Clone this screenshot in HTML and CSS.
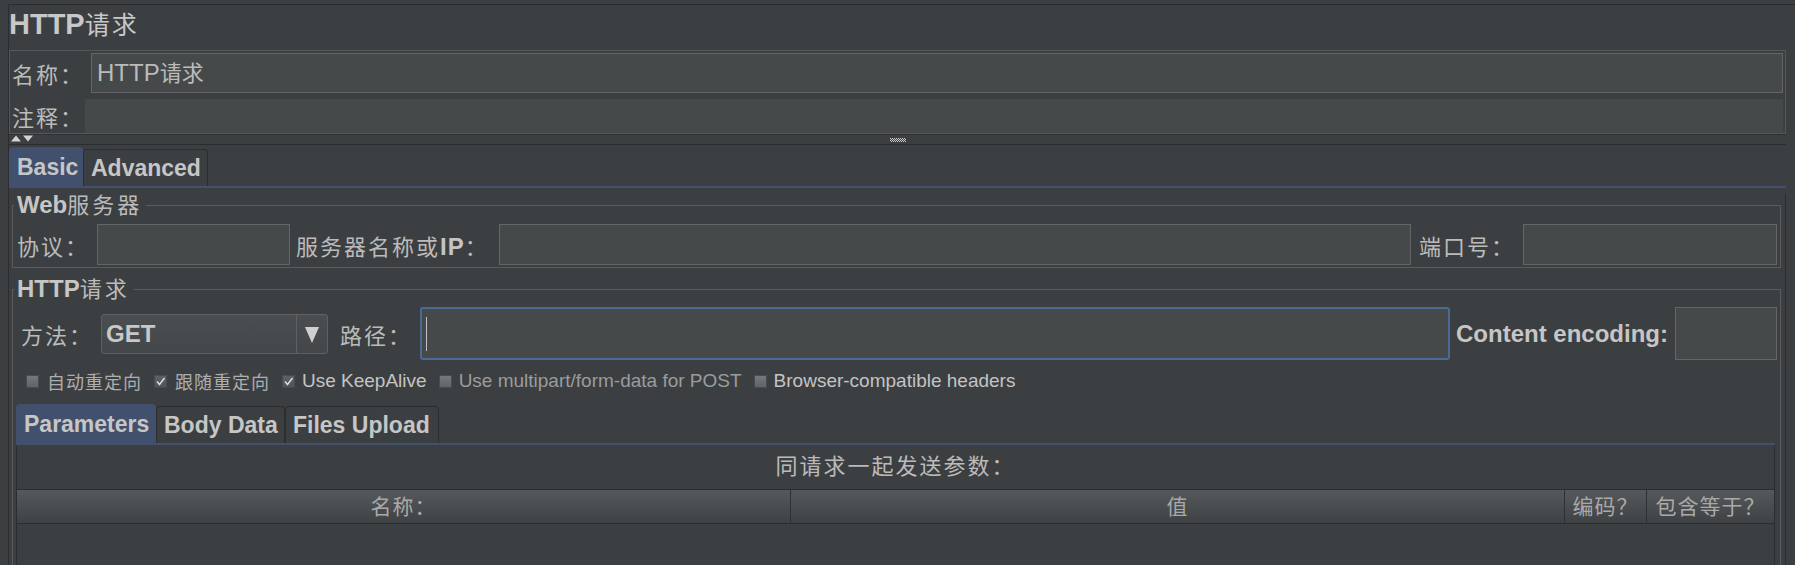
FILE: index.html
```html
<!DOCTYPE html>
<html lang="zh-CN">
<head>
<meta charset="utf-8">
<title>HTTP请求</title>
<link rel="stylesheet" href="styles.css">
</head>
<body>
<div class="frame">
  <div class="title"><b>HTTP</b><span class="title-zh">请求</span></div>

  <div class="namepanel">
    <div class="nrow">
      <span class="lbl nlabel">名称：</span>
      <div class="field namefield"><span class="lat">HTTP</span><span class="zh21">请求</span></div>
    </div>
    <div class="crow">
      <span class="lbl nlabel clabel">注释：</span>
      <div class="commentfield"></div>
    </div>
  </div>

  <div class="divider">
    <svg class="arrows" width="24" height="7" viewBox="0 0 24 7"><polygon points="0,6.5 5,0.5 10,6.5" fill="#d2d2d2"/><polygon points="12,0.5 22,0.5 17,6.5" fill="#d2d2d2"/></svg>
    <svg class="grip" width="16" height="4" viewBox="0 0 16 4"><defs><pattern id="chk" width="2" height="2" patternUnits="userSpaceOnUse"><rect width="1" height="1" fill="#cfcfcf"/><rect x="1" y="1" width="1" height="1" fill="#cfcfcf"/></pattern></defs><rect width="16" height="4" fill="url(#chk)"/></svg>
    <span></span>
  </div>

  <div class="tabs main-tabs">
    <div class="tab sel t-basic">Basic</div>
    <div class="tab t-adv">Advanced</div>
  </div>

  <div class="tabbody">
    <fieldset class="group g-web">
      <legend><b>Web</b><span class="zh">服务器</span></legend>
      <div class="srow">
        <span class="lbl w-proto">协议：</span>
        <div class="field w-protoin"></div>
        <span class="lbl w-server">服务器名称或<b>IP</b>：</span>
        <div class="field grow"></div>
        <span class="lbl w-port">端口号：</span>
        <div class="field w-portin"></div>
      </div>
    </fieldset>

    <fieldset class="group g-http">
      <legend><b>HTTP</b><span class="zh">请求</span></legend>
      <div class="mrow">
        <span class="lbl w-method">方法：</span>
        <div class="combo">
          <span class="combo-val">GET</span>
          <span class="combo-btn"><svg width="14" height="16" viewBox="0 0 14 16"><polygon points="0,0 14,0 7,16" fill="#d0d0d0"/></svg></span>
        </div>
        <span class="lbl w-path">路径：</span>
        <div class="field path grow"><span class="caret"></span></div>
        <span class="enc-lbl">Content encoding:</span>
        <div class="field w-encin"></div>
      </div>

      <div class="cbrow">
        <div class="cb zhcb"><span class="box"></span><span class="cbt">自动重定向</span></div>
        <div class="cb zhcb"><span class="box on"><svg width="11" height="11" viewBox="0 0 11 11"><path d="M2 5.5 L4.5 8.5 L9.5 2" fill="none" stroke="#dadada" stroke-width="1.6"/></svg></span><span class="cbt">跟随重定向</span></div>
        <div class="cb"><span class="box on"><svg width="11" height="11" viewBox="0 0 11 11"><path d="M2 5.5 L4.5 8.5 L9.5 2" fill="none" stroke="#dadada" stroke-width="1.6"/></svg></span><span class="cbt bright">Use KeepAlive</span></div>
        <div class="cb"><span class="box"></span><span class="cbt dim">Use multipart/form-data for POST</span></div>
        <div class="cb"><span class="box"></span><span class="cbt bright">Browser-compatible headers</span></div>
      </div>

      <div class="tabs sub-tabs">
        <div class="tab sel t-params">Parameters</div>
        <div class="tab t-body">Body Data</div>
        <div class="tab t-files">Files Upload</div>
      </div>

      <div class="subpane">
        <div class="caption">同请求一起发送参数：</div>
        <div class="thead">
          <div class="th">名称：</div>
          <div class="th">值</div>
          <div class="th">编码？</div>
          <div class="th">包含等于？</div>
        </div>
        <div class="tbody"></div>
      </div>
    </fieldset>
  </div>
</div>
</body>
</html>
```

FILE: styles.css
```css
* { box-sizing: border-box; }
html, body { margin: 0; padding: 0; }
body {
  background: #3c3f41;
  color: #bbbbbb;
  font-family: "Liberation Sans", "Noto Sans CJK SC", sans-serif;
  width: 1795px;
  height: 565px;
  overflow: hidden;
}
.frame {
  margin: 4px 0 0 8px;
  border-top: 1px solid #2b2d2f;
  border-left: 1px solid #2b2d2f;
  height: 561px;
  overflow: hidden;
}
.title {
  height: 45px;
  line-height: 38px;
  font-size: 29px;
  color: #c8c8c8;
  white-space: nowrap;
}
.title b { font-weight: bold; }
.title-zh { font-size: 25px; letter-spacing: 2px; }

/* name / comment panel */
.namepanel {
  margin-right: 9px;
  border: 1px solid #55585a;
  height: 84px;
  padding-top: 2px;
}
.nrow { display: flex; align-items: center; height: 40px; }
.crow { display: flex; align-items: center; height: 34px; margin-top: 6px; }
.lbl {
  font-size: 22px;
  letter-spacing: 2px;
  white-space: nowrap;
  color: #bbbbbb;
}
.lbl b { font-weight: bold; color: #c4c4c4; font-size: 24px; letter-spacing: 1px; }
.nlabel { width: 81px; padding-left: 2px; }
.clabel { width: 75px; }
.field { background: #45494a; border: 1px solid #636566; }
.namefield {
  flex: 1;
  margin-right: 2px;
  height: 40px;
  line-height: 38px;
  padding-left: 5px;
  white-space: nowrap;
}
.lat { font-size: 24px; }
.zh21 { font-size: 22px; }
.commentfield { flex: 1; margin-right: 2px; height: 34px; background: #45494a; }

/* split divider */
.divider {
  display: grid;
  grid-template-columns: 1fr auto 1fr;
  align-items: center;
  height: 11px;
  margin-right: 9px;
  border-top: 1px solid #2e3032;
  border-bottom: 1px solid #2b2d2f;
}
.arrows { display: block; margin-left: 2px; margin-top: -2px; }
.grip { display: block; }

/* tabs */
.tabs {
  display: flex;
  align-items: flex-end;
  border-bottom: 2px solid #41516d;
}
.tab {
  display: flex;
  align-items: center;
  font-weight: bold;
  font-size: 23px;
  color: #c6c6c6;
  white-space: nowrap;
  border: 1px solid #2b2d2f;
  border-bottom: none;
  border-radius: 4px 4px 0 0;
  height: 37px;
  padding-left: 7px;
}
.tab.sel { background: #41516d; border-color: #41516d; height: 39px; }
.main-tabs { margin-right: 9px; height: 43px; }
.t-basic { width: 74px; }
.t-adv { width: 125px; }

.tabbody {
  margin-right: 9px;
  border-right: 1px solid #2b2d2f;
  height: 400px;
}

/* titled groups */
.group {
  margin: 6px 4px 0 3px;
  padding: 7px 3px 2px 1px;
  border: 1px solid #5a5c5e;
  min-width: 0;
}
.group legend {
  padding: 0 4px 0 3px;
  font-size: 24px;
  line-height: 22px;
  font-weight: bold;
  color: #c6c6c6;
  white-space: nowrap;
}
.zh { font-weight: normal; font-size: 22px; letter-spacing: 3px; color: #bbbbbb; }
.g-http { margin-top: 10px; padding-top: 6px; padding-bottom: 0; height: 400px; }

.srow { display: flex; align-items: center; height: 41px; padding-left: 3px; }
.srow .field { height: 41px; }
.w-proto { width: 80px; }
.w-protoin { width: 193px; }
.w-server { width: 203px; margin-left: 6px; }
.grow { flex: 1; }
.w-port { width: 104px; margin-left: 8px; }
.w-portin { width: 254px; }

.mrow { display: flex; align-items: center; height: 53px; padding-left: 7px; }
.w-method { width: 80px; }
.combo {
  width: 227px;
  height: 40px;
  display: flex;
  border: 1px solid #5e6062;
  border-radius: 3px;
  background: linear-gradient(#4a4e50, #434749);
}
.combo-val {
  flex: 1;
  font-weight: bold;
  font-size: 24px;
  line-height: 38px;
  padding-left: 4px;
  color: #c8c8c8;
}
.combo-btn {
  width: 31px;
  border-left: 1px solid #5e6062;
  display: flex;
  align-items: center;
  justify-content: center;
}
.combo-btn svg { display: block; margin-top: 2px; }
.w-path { width: 80px; margin-left: 12px; }
.path {
  height: 53px;
  border: 2px solid #4b6a96;
  border-radius: 3px;
  display: flex;
  align-items: center;
}
.caret { width: 1px; height: 34px; background: #c0c0c0; margin-left: 4px; }
.enc-lbl {
  margin-left: 6px;
  width: 219px;
  font-weight: bold;
  font-size: 24px;
  color: #c6c6c6;
  white-space: nowrap;
}
.w-encin { width: 102px; height: 53px; }

/* checkboxes */
.cbrow {
  display: flex;
  align-items: center;
  height: 30px;
  margin-top: 6px;
  padding-left: 12px;
}
.cb { display: flex; align-items: center; margin-right: 12px; white-space: nowrap; }
.box {
  width: 13px;
  height: 13px;
  margin-right: 7px;
  border: 1px solid #4a4d4f;
  background: linear-gradient(#76797c, #616466);
  display: flex;
  align-items: center;
  justify-content: center;
}
.box.on { background: linear-gradient(#5e6163, #505355); }
.box svg { display: block; }
.cbt { font-size: 19px; color: #bbbbbb; }
.zhcb .cbt { font-size: 18px; letter-spacing: 1px; color: #aeaeae; margin-left: 1px; }
.cbt.bright { color: #c4c4c4; }
.cbt.dim { color: #9a9c9e; }

/* sub tabs */
.sub-tabs { margin: 8px 2px 0 2px; height: 41px; }
.t-params { width: 140px; }
.t-body { width: 129px; padding-left: 7px; }
.t-files { width: 154px; padding-left: 7px; }

.subpane {
  margin: 0 2px 0 2px;
  border-left: 1px solid #2b2d2f;
  border-right: 1px solid #2b2d2f;
}
.caption {
  height: 44px;
  line-height: 44px;
  text-align: center;
  font-size: 22px;
  letter-spacing: 2px;
  color: #bbbbbb;
}
.thead {
  display: grid;
  grid-template-columns: 773px 774px 82px 1fr;
  height: 35px;
  border-top: 1px solid #2b2d2f;
  border-bottom: 1px solid #2b2d2f;
  background: linear-gradient(#55595c, #3f4244);
}
.th {
  text-align: center;
  font-size: 21px;
  letter-spacing: 1px;
  line-height: 33px;
  color: #a9a9a9;
  white-space: nowrap;
  overflow: hidden;
}
.th + .th { border-left: 1px solid #2e3032; }
.tbody { height: 80px; }
```
